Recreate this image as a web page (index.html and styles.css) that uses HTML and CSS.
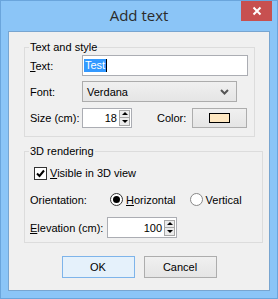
FILE: index.html
```html
<!DOCTYPE html>
<html>

<head>
    <link rel="stylesheet" href="styles.css">
</head>

<body>

    <div class="window">
        <div class="titlebar">
            <span class="title">Add text</span>
            <span class="close">
                <svg width="10" height="10" viewBox="0 0 10 10">
                    <path d="M1.5 1.5 L8.5 8.5 M8.5 1.5 L1.5 8.5" stroke="#fff" stroke-width="2" />
                </svg>
            </span>
        </div>

        <div class="client">
            <fieldset class="group group-text">
                <legend>Text and style</legend>

                <div class="row">
                    <span class="lbl"><u>T</u>ext:</span>
                    <span class="field text-field"><span class="sel">Test</span><span class="caret"></span></span>
                </div>

                <div class="row">
                    <span class="lbl">Font:</span>
                    <span class="combo">
                        <span class="combo-val">Verdana</span>
                        <svg width="9" height="6" viewBox="0 0 9 6">
                            <path d="M1 1 L4.5 4.5 L8 1" stroke="#555" stroke-width="2" fill="none" />
                        </svg>
                    </span>
                </div>

                <div class="row">
                    <span class="lbl">Size (cm):</span>
                    <span class="field spin spin-size">
                        <span class="val">18</span>
                        <span class="arrows"><span class="up"></span><span class="down"></span></span>
                    </span>
                    <span class="color-lbl">Color:</span>
                    <span class="color-btn"><span class="swatch"></span></span>
                </div>
            </fieldset>

            <fieldset class="group group-3d">
                <legend>3D rendering</legend>

                <div class="row check-row">
                    <span class="checkbox">
                        <svg width="11" height="11" viewBox="0 0 11 11">
                            <path d="M2 5.5 L4.5 8 L9 2.5" stroke="#000" stroke-width="2" fill="none" />
                        </svg>
                    </span>
                    <span><u>V</u>isible in 3D view</span>
                </div>

                <div class="row">
                    <span class="lbl lbl-orient">Orientation:</span>
                    <span class="radio checked"></span>
                    <span class="radio-text"><u>H</u>orizontal</span>
                    <span class="radio"></span>
                    <span class="radio-text">Vertical</span>
                </div>

                <div class="row">
                    <span class="lbl lbl-elev"><u>E</u>levation (cm):</span>
                    <span class="field spin spin-elev">
                        <span class="val">100</span>
                        <span class="arrows"><span class="up"></span><span class="down"></span></span>
                    </span>
                </div>
            </fieldset>

            <div class="buttons">
                <span class="btn btn-ok">OK</span>
                <span class="btn">Cancel</span>
            </div>
        </div>
    </div>

</body>

</html>
```

FILE: styles.css
```css
body {
    margin: 0;
    font-family: "Liberation Sans", Arial, sans-serif;
    font-size: 11px;
    color: #000;
}

.window {
    width: 278px;
    height: 299px;
    box-sizing: border-box;
    border: 1px solid #6aa5dc;
    background: #8bc5f7;
}

.titlebar {
    height: 30px;
    display: grid;
    grid-template-columns: 1fr auto 1fr;
}

.title {
    grid-column: 2;
    font-family: "Open Sans", "Noto Sans", sans-serif;
    font-size: 15px;
    line-height: 28px;
    color: #2b2b2b;
}

.close {
    grid-column: 3;
    justify-self: end;
    width: 31px;
    height: 20px;
    margin-right: 5px;
    background: #c75050;
    display: flex;
    align-items: center;
    justify-content: center;
}

.client {
    margin: 0 7px;
    height: 260px;
    box-sizing: border-box;
    border: 1px solid #78a5d0;
    background: #f0f0f0;
    padding: 0 15px;
}

.group {
    margin: 9px 0 0;
    padding: 0 6px 8px 5px;
    border: 1px solid #dcdcdc;
}

.group legend {
    padding: 0 1px;
    margin-left: -1px;
    line-height: 13px;
}

.row {
    display: flex;
    align-items: center;
    height: 21px;
    margin-top: 5px;
}

.group-text .row:first-of-type {
    margin-top: 1px;
}

.lbl {
    width: 52px;
}

.field {
    height: 21px;
    box-sizing: border-box;
    border: 1px solid #abadb3;
    background: #fff;
    display: flex;
    align-items: center;
}

.text-field {
    width: 166px;
    padding-left: 1px;
}

.sel {
    background: #3399ff;
    color: #fff;
    line-height: 13px;
    padding: 0 1px;
}

.caret {
    width: 1px;
    height: 13px;
    background: #000;
}

.combo {
    width: 155px;
    height: 21px;
    box-sizing: border-box;
    border: 1px solid #acacac;
    background: linear-gradient(#f0f0f0, #e5e5e5);
    display: flex;
    align-items: center;
    padding: 0 7px 0 4px;
}

.combo-val {
    flex: 1;
}

.spin {
    height: 20px;
}

.spin-size {
    width: 50px;
}

.spin .val {
    flex: 1;
    text-align: right;
    padding-right: 2px;
}

.arrows {
    width: 11px;
    height: 16px;
    margin-right: 1px;
    box-sizing: border-box;
    border: 1px solid #a7a7a7;
    background: #ececec;
    display: flex;
    flex-direction: column;
}

.arrows span {
    flex: 1;
    display: flex;
    align-items: center;
    justify-content: center;
}

.arrows .up {
    border-bottom: 1px solid #a7a7a7;
}

.arrows .up::before,
.arrows .down::before {
    content: "";
    border-left: 3px solid transparent;
    border-right: 3px solid transparent;
}

.arrows .up::before {
    border-bottom: 3px solid #000;
}

.arrows .down::before {
    border-top: 3px solid #000;
}

.color-lbl {
    margin-left: 25px;
    width: 35px;
}

.color-btn {
    width: 55px;
    height: 20px;
    box-sizing: border-box;
    border: 1px solid #adadad;
    background: linear-gradient(#f0f0f0, #e5e5e5);
    display: flex;
    align-items: center;
    justify-content: center;
}

.swatch {
    width: 21px;
    height: 10px;
    box-sizing: border-box;
    border: 1px solid #000;
    background: #ffe8c2;
}

.group-3d {
    margin-top: 8px;
    padding-bottom: 4px;
}

.group-3d .row {
    margin-top: 7px;
}

.group-3d .check-row {
    margin-top: 6px;
    height: 18px;
}

.checkbox {
    width: 13px;
    height: 13px;
    box-sizing: border-box;
    border: 1px solid #333;
    background: #fff;
    margin: 0 3px 0 4px;
    display: flex;
    align-items: center;
    justify-content: center;
}

.lbl-orient {
    width: 80px;
}

.radio {
    width: 13px;
    height: 13px;
    box-sizing: border-box;
    border: 1px solid #888;
    border-radius: 50%;
    background: #fff;
    margin-right: 3px;
    display: flex;
    align-items: center;
    justify-content: center;
}

.radio.checked {
    border-color: #333;
}

.radio.checked::before {
    content: "";
    width: 7px;
    height: 7px;
    border-radius: 50%;
    background: #000;
}

.radio-text {
    margin-right: 14px;
}

.lbl-elev {
    width: 77px;
}

.spin-elev {
    width: 70px;
    height: 21px;
}

.buttons {
    display: flex;
    justify-content: center;
    gap: 9px;
    margin-top: 13px;
}

.btn {
    width: 73px;
    height: 22px;
    box-sizing: border-box;
    border: 1px solid #adadad;
    background: linear-gradient(#f0f0f0, #e5e5e5);
    display: flex;
    align-items: center;
    justify-content: center;
}

.btn-ok {
    border-color: #7eb4ea;
    background: #e5f1fb;
}
```
